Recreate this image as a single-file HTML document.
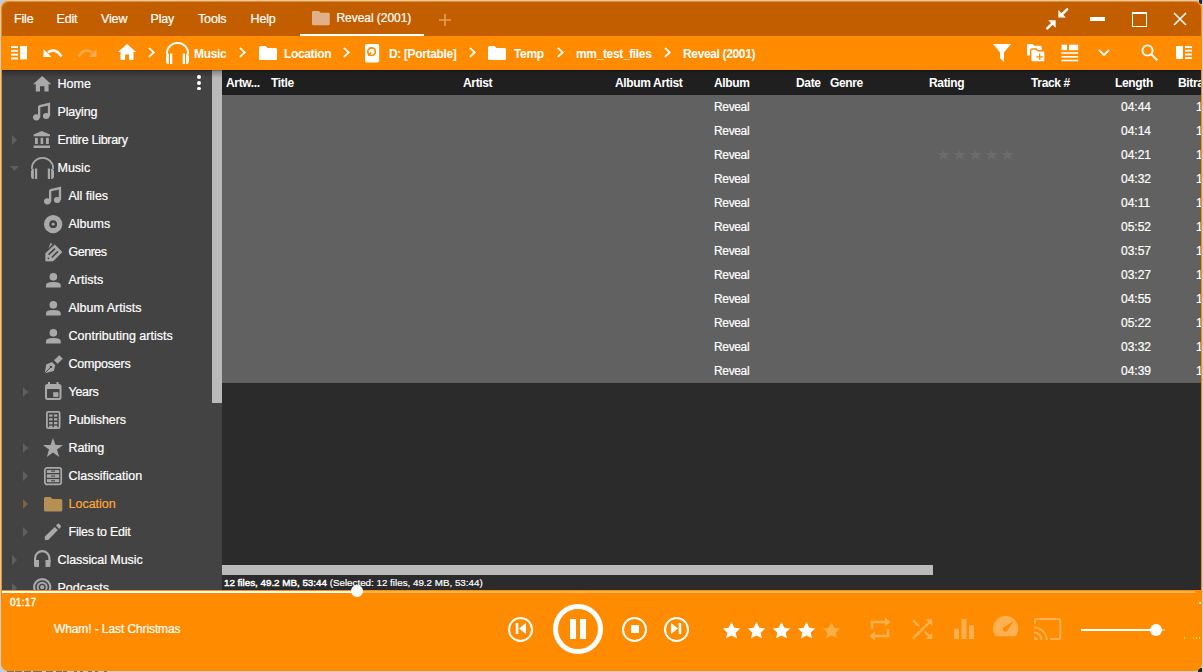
<!DOCTYPE html>
<html><head><meta charset="utf-8">
<style>
*{margin:0;padding:0;box-sizing:border-box}
html,body{width:1203px;height:672px;overflow:hidden;background:#c8cbd0;font-family:"Liberation Sans",sans-serif;position:relative}
.t{position:absolute;white-space:nowrap;line-height:1;-webkit-text-stroke:0.2px currentColor}
.s{position:absolute;overflow:visible}
.r{position:absolute}
</style></head><body>
<div class="r" style="left:1px;top:1px;width:1201px;height:670px;background:#ff8c00;border-radius:8px"></div>
<div class="r" style="left:1199px;top:0px;width:3px;height:4px;background:#1e2a3c;border-radius:0 0 0 2px"></div>
<div class="r" style="left:1198px;top:668px;width:4px;height:4px;background:#20242a;border-radius:3px 0 0 0"></div>
<div class="r" style="left:1px;top:1px;width:1201px;height:670px;background:#ff8c00;border-radius:8px"></div>
<div class="r" style="left:2px;top:2px;width:1199px;height:34px;background:#c35e00;border-radius:7px 7px 0 0"></div>
<div class="t" style="left:14px;top:13.42px;font-size:12.5px;color:#fff;letter-spacing:-0.15px">File</div>
<div class="t" style="left:56.5px;top:13.42px;font-size:12.5px;color:#fff;letter-spacing:-0.15px">Edit</div>
<div class="t" style="left:101px;top:13.42px;font-size:12.5px;color:#fff;letter-spacing:-0.15px">View</div>
<div class="t" style="left:150.5px;top:13.42px;font-size:12.5px;color:#fff;letter-spacing:-0.15px">Play</div>
<div class="t" style="left:198px;top:13.42px;font-size:12.5px;color:#fff;letter-spacing:-0.15px">Tools</div>
<div class="t" style="left:250.5px;top:13.42px;font-size:12.5px;color:#fff;letter-spacing:-0.15px">Help</div>
<svg class="s" style="left:312px;top:10.9px;" width="17.8" height="14.2" viewBox="0 0 17.8 14.2"><path d="M0 1.3Q0 0 1.3 0H6.8L8.6 1.8H16.5Q17.8 1.8 17.8 3.1V12.9Q17.8 14.2 16.5 14.2H1.3Q0 14.2 0 12.9Z" fill="#e0b088"/></svg>
<div class="t" style="left:336.5px;top:12.44px;font-size:12px;color:#fff;letter-spacing:-0.05px">Reveal (2001)</div>
<div class="r" style="left:300px;top:34px;width:124px;height:2px;background:#fff;"></div>
<svg class="s" style="left:438px;top:14px;" width="14" height="12" viewBox="0 0 14 12"><path d="M7 0V12M1 6H13" stroke="#e0a060" stroke-width="1.6"/></svg>
<svg class="s" style="left:1045px;top:7px;" width="24" height="23" viewBox="0 0 24 23"><g stroke="#fff" stroke-width="2.5" stroke-linecap="round" fill="none"><path d="M22.1 2.3L16.2 8.2"/><path d="M2.3 21.4L7.9 15.9"/></g><g fill="#fff"><path d="M13.3 3V10.4H20.9Z"/><path d="M10.6 13.3H3.2L10.6 20.8Z"/></g></svg>
<div class="r" style="left:1090px;top:17px;width:15px;height:3.5px;background:#fff;"></div>
<div class="r" style="left:1131.5px;top:11.5px;width:15px;height:15px;border:1.5px solid #fff;border-top-width:2.6px"></div>
<svg class="s" style="left:1173px;top:12px;" width="14" height="14" viewBox="0 0 14 14"><path d="M1 1L13 13M13 1L1 13" stroke="#fff" stroke-width="1.6"/></svg>
<svg class="s" style="left:11px;top:46px;" width="17" height="14" viewBox="0 0 17 14"><g fill="#fff"><rect x="0" y="0.1" width="7" height="1.9"/><rect x="0" y="3.9" width="7" height="1.9"/><rect x="0" y="7.7" width="7" height="1.9"/><rect x="0" y="11.5" width="7" height="1.9"/><rect x="9.1" y="0.1" width="6.9" height="13.3"/></g></svg>
<svg class="s" style="left:43px;top:48px;" width="20" height="10" viewBox="0 0 20 10"><path d="M5 4.5Q12 -1 18.5 8.5" stroke="#fff" stroke-width="2.4" fill="none"/><path d="M0.5 1V9H8.5Z" fill="#fff"/></svg>
<svg class="s" style="left:77px;top:48px;" width="20" height="10" viewBox="0 0 20 10"><path d="M15 4.5Q8 -1 1.5 8.5" stroke="#ffaa50" stroke-width="2.4" fill="none"/><path d="M19.5 1V9H11.5Z" fill="#ffaa50"/></svg>
<svg class="s" style="left:118px;top:44px;" width="18" height="16" viewBox="0 0 18 16"><path d="M9 0L18 8H15.5V16H11V10.5H7V16H2.5V8H0Z" fill="#fff"/></svg>
<svg class="s" style="left:148px;top:47.2px;" width="8" height="11" viewBox="0 0 8 11"><path d="M0.9 0.9L5.7 5.4L0.9 9.9" stroke="#fff" stroke-width="1.8" fill="none"/></svg>
<svg class="s" style="left:165.5px;top:42.4px;" width="23" height="22" viewBox="0 0 23 22"><path d="M0.85 12V11.5A10.65 10.65 0 0 1 22.15 11.5V12" fill="none" stroke="#fff" stroke-width="1.9"/><g fill="#fff"><path d="M2.9 11.8V22H2.4Q0 22 0 19V15Q0 11.8 2.4 11.8Z"/><rect x="4" y="11.5" width="2.3" height="10.5"/><path d="M20.1 11.8V22H20.6Q23 22 23 19V15Q23 11.8 20.6 11.8Z"/><rect x="16.7" y="11.5" width="2.3" height="10.5"/></g></svg>
<div class="t" style="left:194px;top:47.84px;font-size:12px;font-weight:bold;color:#fff;letter-spacing:-0.35px;-webkit-text-stroke:0;">Music</div>
<svg class="s" style="left:239px;top:47.2px;" width="8" height="11" viewBox="0 0 8 11"><path d="M0.9 0.9L5.7 5.4L0.9 9.9" stroke="#fff" stroke-width="1.8" fill="none"/></svg>
<svg class="s" style="left:259px;top:46px;" width="18" height="14" viewBox="0 0 18 14"><path d="M0 1.5Q0 0 1.5 0H6.5L8.5 2H16.5Q18 2 18 3.5V12.5Q18 14 16.5 14H1.5Q0 14 0 12.5Z" fill="#fff"/></svg>
<div class="t" style="left:284px;top:47.84px;font-size:12px;font-weight:bold;color:#fff;letter-spacing:-0.35px;-webkit-text-stroke:0;">Location</div>
<svg class="s" style="left:343px;top:47.2px;" width="8" height="11" viewBox="0 0 8 11"><path d="M0.9 0.9L5.7 5.4L0.9 9.9" stroke="#fff" stroke-width="1.8" fill="none"/></svg>
<svg class="s" style="left:365px;top:43.6px;" width="14.2" height="18.6" viewBox="0 0 14.2 18.6"><rect x="0" y="0" width="14.2" height="18.6" rx="1.8" fill="#fff"/><circle cx="6.6" cy="7.7" r="3.8" fill="none" stroke="#ff8c00" stroke-width="1.7"/><path d="M6.6 7.7L3.4 11.8" stroke="#ff8c00" stroke-width="1.7"/><circle cx="6.6" cy="7.7" r="1" fill="#fff"/></svg>
<div class="t" style="left:389px;top:47.84px;font-size:12px;font-weight:bold;color:#fff;letter-spacing:-0.35px;-webkit-text-stroke:0;">D: [Portable]</div>
<svg class="s" style="left:469px;top:47.2px;" width="8" height="11" viewBox="0 0 8 11"><path d="M0.9 0.9L5.7 5.4L0.9 9.9" stroke="#fff" stroke-width="1.8" fill="none"/></svg>
<svg class="s" style="left:488px;top:46px;" width="18" height="14" viewBox="0 0 18 14"><path d="M0 1.5Q0 0 1.5 0H6.5L8.5 2H16.5Q18 2 18 3.5V12.5Q18 14 16.5 14H1.5Q0 14 0 12.5Z" fill="#fff"/></svg>
<div class="t" style="left:514px;top:47.84px;font-size:12px;font-weight:bold;color:#fff;letter-spacing:-0.35px;-webkit-text-stroke:0;">Temp</div>
<svg class="s" style="left:557px;top:47.2px;" width="8" height="11" viewBox="0 0 8 11"><path d="M0.9 0.9L5.7 5.4L0.9 9.9" stroke="#fff" stroke-width="1.8" fill="none"/></svg>
<div class="t" style="left:576px;top:47.84px;font-size:12px;font-weight:bold;color:#fff;letter-spacing:-0.35px;-webkit-text-stroke:0;">mm_test_files</div>
<svg class="s" style="left:664px;top:47.2px;" width="8" height="11" viewBox="0 0 8 11"><path d="M0.9 0.9L5.7 5.4L0.9 9.9" stroke="#fff" stroke-width="1.8" fill="none"/></svg>
<div class="t" style="left:683px;top:47.84px;font-size:12px;font-weight:bold;color:#fff;letter-spacing:-0.35px;-webkit-text-stroke:0;">Reveal (2001)</div>
<svg class="s" style="left:993px;top:44px;" width="18" height="18" viewBox="0 0 18 18"><path d="M0 0H18L11 8.5V18L7 14V8.5Z" fill="#fff"/></svg>
<svg class="s" style="left:1026px;top:43px;" width="20" height="20" viewBox="0 0 20 20"><path d="M1 2.4Q1 1 2.4 1H6.5L8.2 2.7H14.3Q15.7 2.7 15.7 4.1V12.5H1Z" fill="#fff"/><path d="M4.7 7.4Q4.7 6 6.1 6H10.2L11.9 7.7H17.6Q19 7.7 19 9.1V17.5Q19 18.9 17.6 18.9H6.1Q4.7 18.9 4.7 17.5Z" fill="#fff" stroke="#ff8c00" stroke-width="1.4"/><path d="M13.7 10.6V17M10.5 13.8H16.9" stroke="#ff8c00" stroke-width="1.3"/></svg>
<svg class="s" style="left:1061px;top:44px;" width="18" height="18" viewBox="0 0 18 18"><g fill="#fff"><rect x="0.5" y="0.7" width="5.5" height="5.5"/><rect x="8" y="0.7" width="9.2" height="5.5"/><rect x="0.5" y="8.2" width="16.7" height="1.6"/><rect x="0.5" y="12" width="16.7" height="1.6"/><rect x="0.5" y="15.7" width="16.7" height="1.6"/></g></svg>
<svg class="s" style="left:1098px;top:49px;" width="12" height="8" viewBox="0 0 12 8"><path d="M1 1L6 6L11 1" stroke="#fff" stroke-width="1.8" fill="none"/></svg>
<svg class="s" style="left:1141px;top:44px;" width="17" height="17" viewBox="0 0 17 17"><circle cx="6.5" cy="6.5" r="5.1" stroke="#fff" stroke-width="1.8" fill="none"/><path d="M10.1 10.1L16.2 16.2" stroke="#fff" stroke-width="2"/></svg>
<svg class="s" style="left:1176px;top:46.4px;" width="17" height="14" viewBox="0 0 17 14"><g fill="#fff"><rect x="0" y="0" width="6.9" height="13"/><rect x="9" y="0" width="7" height="1.9"/><rect x="9" y="3.7" width="7" height="1.9"/><rect x="9" y="7.5" width="7" height="1.9"/><rect x="9" y="11.1" width="7" height="1.9"/></g></svg>
<div class="r" style="left:2px;top:70px;width:220px;height:520px;background:#434343;"></div>
<div class="r" style="left:212px;top:70px;width:10px;height:333px;background:#bababa;"></div>
<div class="r" style="left:2px;top:70px;width:220px;height:8px;background:linear-gradient(rgba(0,0,0,0.5),rgba(0,0,0,0.25) 20%,rgba(0,0,0,0) 100%);"></div>
<div class="r" style="left:197.1px;top:75.39999999999999px;width:3.8px;height:3.8px;border-radius:50%;background:#fff"></div>
<div class="r" style="left:197.1px;top:81.0px;width:3.8px;height:3.8px;border-radius:50%;background:#fff"></div>
<div class="r" style="left:197.1px;top:86.6px;width:3.8px;height:3.8px;border-radius:50%;background:#fff"></div>
<svg class="s" style="left:32.8px;top:76.3px;" width="18.4" height="15.4" viewBox="0 0 18.4 15.4"><path d="M9.2 0L18.4 8.2H15.6V15.4H11.4V10.2H7V15.4H2.8V8.2H0Z" fill="#a9a9a9"/></svg>
<div class="t" style="left:57.5px;top:78.42px;font-size:12.5px;color:#fff;letter-spacing:0px;">Home</div>
<svg class="s" style="left:33.4px;top:102.75px;" width="17.2" height="17.5" viewBox="0 0 17.2 17.5"><path d="M6 3.3L16 1V13" stroke="#a9a9a9" stroke-width="2.3" fill="none"/><ellipse cx="3.4" cy="14.3" rx="3.4" ry="3.1" fill="#a9a9a9"/><ellipse cx="13.2" cy="12.9" rx="3.3" ry="3" fill="#a9a9a9"/><rect x="5" y="3" width="2.3" height="11.5" fill="#a9a9a9"/></svg>
<div class="t" style="left:57.5px;top:106.42px;font-size:12.5px;color:#fff;letter-spacing:-0.18px;">Playing</div>
<svg class="s" style="left:12px;top:135px;" width="6" height="10" viewBox="0 0 6 10"><path d="M0 0L5 5L0 10Z" fill="#5f5f5f"/></svg>
<svg class="s" style="left:33.0px;top:131.0px;" width="18" height="18" viewBox="0 0 18 18"><path d="M0.6 3.6L8.8 0L17 3.6V5.2H0.6Z" fill="#a9a9a9"/><g fill="#a9a9a9"><rect x="2" y="6.8" width="2.8" height="6.2"/><rect x="7.6" y="6.8" width="2.6" height="6.2"/><rect x="13" y="6.8" width="2.8" height="6.2"/><rect x="0.6" y="14.5" width="16.4" height="2.5"/></g></svg>
<div class="t" style="left:57.5px;top:134.42px;font-size:12.5px;color:#fff;letter-spacing:-0.3px;">Entire Library</div>
<svg class="s" style="left:10.4px;top:165.7px;" width="10" height="6" viewBox="0 0 10 6"><path d="M0 0H9L4.5 4.8Z" fill="#5f5f5f"/></svg>
<svg class="s" style="left:30.5px;top:157.0px;" width="23" height="22" viewBox="0 0 23 22"><path d="M0.85 12V11.5A10.65 10.65 0 0 1 22.15 11.5V12" fill="none" stroke="#a9a9a9" stroke-width="1.7"/><g fill="#a9a9a9"><path d="M2.9 11.8V22H2.4Q0 22 0 19V15Q0 11.8 2.4 11.8Z"/><rect x="4" y="11.5" width="2.2" height="10.5"/><path d="M20.1 11.8V22H20.6Q23 22 23 19V15Q23 11.8 20.6 11.8Z"/><rect x="16.8" y="11.5" width="2.2" height="10.5"/></g></svg>
<div class="t" style="left:57.5px;top:162.42px;font-size:12.5px;color:#fff;letter-spacing:0px;">Music</div>
<svg class="s" style="left:44.4px;top:186.55px;" width="17.2" height="17.5" viewBox="0 0 17.2 17.5"><path d="M6 3.3L16 1V13" stroke="#a9a9a9" stroke-width="2.3" fill="none"/><ellipse cx="3.4" cy="14.3" rx="3.4" ry="3.1" fill="#a9a9a9"/><ellipse cx="13.2" cy="12.9" rx="3.3" ry="3" fill="#a9a9a9"/><rect x="5" y="3" width="2.3" height="11.5" fill="#a9a9a9"/></svg>
<div class="t" style="left:68.5px;top:190.42px;font-size:12.5px;color:#fff;letter-spacing:0px;">All files</div>
<svg class="s" style="left:43.85px;top:214.85px;" width="18.3" height="18.3" viewBox="0 0 18.3 18.3"><circle cx="9.15" cy="9.15" r="9.15" fill="#a9a9a9"/><circle cx="9.15" cy="9.15" r="3.9" fill="#434343"/><circle cx="9.15" cy="9.15" r="1.4" fill="#a9a9a9"/></svg>
<div class="t" style="left:68.5px;top:218.42px;font-size:12.5px;color:#fff;letter-spacing:0px;">Albums</div>
<svg class="s" style="left:43.5px;top:241.5px;" width="19" height="20" viewBox="0 0 19 20"><path d="M1.7 19.1V11.2L10.8 2.8L18.1 10L9.2 19.1Z" fill="#a9a9a9" stroke="#a9a9a9" stroke-width="0.6" stroke-linejoin="round"/><path d="M4.6 12.6L11 6.6M7.8 15.5L13.9 9.4" stroke="#434343" stroke-width="1.6"/><circle cx="4.4" cy="16.4" r="0.8" fill="#434343"/><path d="M4.4 6.4L6.6 0.8L8.4 1.9Z" fill="#a9a9a9"/></svg>
<div class="t" style="left:68.5px;top:246.42px;font-size:12.5px;color:#fff;letter-spacing:-0.5px;">Genres</div>
<svg class="s" style="left:45.65px;top:272.75px;" width="14.7" height="14.5" viewBox="0 0 14.7 14.5"><circle cx="7.35" cy="3.85" r="3.85" fill="#a9a9a9"/><path d="M0 14.5V12.3Q0 9 7.35 9Q14.7 9 14.7 12.3V14.5Z" fill="#a9a9a9"/></svg>
<div class="t" style="left:68.5px;top:274.42px;font-size:12.5px;color:#fff;letter-spacing:0px;">Artists</div>
<svg class="s" style="left:45.65px;top:300.75px;" width="14.7" height="14.5" viewBox="0 0 14.7 14.5"><circle cx="7.35" cy="3.85" r="3.85" fill="#a9a9a9"/><path d="M0 14.5V12.3Q0 9 7.35 9Q14.7 9 14.7 12.3V14.5Z" fill="#a9a9a9"/></svg>
<div class="t" style="left:68.5px;top:302.42px;font-size:12.5px;color:#fff;letter-spacing:0px;">Album Artists</div>
<svg class="s" style="left:45.65px;top:328.75px;" width="14.7" height="14.5" viewBox="0 0 14.7 14.5"><circle cx="7.35" cy="3.85" r="3.85" fill="#a9a9a9"/><path d="M0 14.5V12.3Q0 9 7.35 9Q14.7 9 14.7 12.3V14.5Z" fill="#a9a9a9"/></svg>
<div class="t" style="left:68.5px;top:330.42px;font-size:12.5px;color:#fff;letter-spacing:0px;">Contributing artists</div>
<svg class="s" style="left:43.5px;top:355.1px;" width="19" height="19" viewBox="0 0 19 19"><path d="M10.25 5.2L15.25 0.4L18.5 3.75L13.6 8.6Z" fill="#a9a9a9" stroke="#a9a9a9" stroke-width="0.5" stroke-linejoin="round"/><path d="M0.8 18.2L2.2 9.5L8 7L11.3 10.3L9.8 16.1Z" fill="#a9a9a9"/><path d="M1.1 17.9L6.5 12.4" stroke="#434343" stroke-width="0.9"/><circle cx="6.9" cy="11.9" r="1.2" fill="#434343"/></svg>
<div class="t" style="left:68.5px;top:358.42px;font-size:12.5px;color:#fff;letter-spacing:-0.2px;">Composers</div>
<svg class="s" style="left:23px;top:387px;" width="6" height="10" viewBox="0 0 6 10"><path d="M0 0L5 5L0 10Z" fill="#5f5f5f"/></svg>
<svg class="s" style="left:44.75px;top:382.1px;" width="16.5" height="18" viewBox="0 0 16.5 18"><rect x="1" y="3" width="14.5" height="14" rx="1.5" fill="none" stroke="#a9a9a9" stroke-width="2"/><rect x="1" y="3" width="14.5" height="4" fill="#a9a9a9"/><g fill="#a9a9a9"><rect x="3" y="0" width="2" height="4"/><rect x="11.5" y="0" width="2" height="4"/><rect x="8.2" y="10.2" width="5.2" height="4.7"/></g></svg>
<div class="t" style="left:68.5px;top:386.42px;font-size:12.5px;color:#fff;letter-spacing:-0.3px;">Years</div>
<svg class="s" style="left:45.75px;top:411.0px;" width="14.5" height="18" viewBox="0 0 14.5 18"><rect x="0.9" y="0.9" width="12.7" height="16.2" rx="1.2" fill="none" stroke="#a9a9a9" stroke-width="1.8"/><g fill="#a9a9a9"><rect x="3.2" y="3.4" width="3.3" height="2.3"/><rect x="8" y="3.4" width="3.3" height="2.3"/><rect x="3.2" y="7.2" width="3.3" height="2.3"/><rect x="8" y="7.2" width="3.3" height="2.3"/><rect x="3.2" y="11" width="3.3" height="2.3"/><rect x="8" y="11" width="3.3" height="2.3"/><rect x="3.2" y="14.6" width="3.3" height="2.4"/><rect x="8" y="14.6" width="3.3" height="2.4"/></g></svg>
<div class="t" style="left:68.5px;top:414.42px;font-size:12.5px;color:#fff;letter-spacing:-0.1px;">Publishers</div>
<svg class="s" style="left:23px;top:443px;" width="6" height="10" viewBox="0 0 6 10"><path d="M0 0L5 5L0 10Z" fill="#5f5f5f"/></svg>
<svg class="s" style="left:43.0px;top:438.1px;" width="20" height="19" viewBox="0 0 20 19"><path d="M10 0L12.5 7H20L14 11.5L16.2 19L10 14.5L3.8 19L6 11.5L0 7H7.5Z" fill="#a9a9a9"/></svg>
<div class="t" style="left:68.5px;top:442.42px;font-size:12.5px;color:#fff;letter-spacing:-0.1px;">Rating</div>
<svg class="s" style="left:23px;top:471px;" width="6" height="10" viewBox="0 0 6 10"><path d="M0 0L5 5L0 10Z" fill="#5f5f5f"/></svg>
<svg class="s" style="left:43.95px;top:466.85px;" width="18.1" height="18.3" viewBox="0 0 18.1 18.3"><rect x="0.85" y="0.85" width="16.4" height="16.6" rx="2.2" fill="none" stroke="#a9a9a9" stroke-width="1.7"/><g fill="#a9a9a9"><rect x="2.9" y="3.1" width="12.3" height="2.9"/><rect x="2.9" y="7.3" width="12.3" height="3.5"/><rect x="2.9" y="12.1" width="12.3" height="3.1"/></g><g fill="#434343"><rect x="7.2" y="3.6" width="3.8" height="1.1"/><rect x="7.2" y="8.5" width="3.8" height="1.1"/><rect x="7.2" y="13.2" width="3.8" height="1.1"/></g></svg>
<div class="t" style="left:68.5px;top:470.42px;font-size:12.5px;color:#fff;letter-spacing:0px;">Classification</div>
<svg class="s" style="left:23px;top:499px;" width="6" height="10" viewBox="0 0 6 10"><path d="M0 0L5 5L0 10Z" fill="#7a6440"/></svg>
<svg class="s" style="left:43.85px;top:496.5px;" width="18.3" height="14.5" viewBox="0 0 18.3 14.5"><path d="M0 1.5Q0 0 1.5 0H6.5L8.5 2H16.8Q18.3 2 18.3 3.5V13Q18.3 14.5 16.8 14.5H1.5Q0 14.5 0 13Z" fill="#b59055"/></svg>
<div class="t" style="left:68.5px;top:498.42px;font-size:12.5px;color:#ffa836;letter-spacing:0px;">Location</div>
<svg class="s" style="left:23px;top:527px;" width="6" height="10" viewBox="0 0 6 10"><path d="M0 0L5 5L0 10Z" fill="#5f5f5f"/></svg>
<svg class="s" style="left:44.0px;top:521.5px;" width="18" height="19" viewBox="0 0 18 19"><path d="M0.8 17.9V14.4L10.8 5L13.9 8.1L4.2 17.9Z" fill="#a9a9a9"/><path d="M12 3.5L14.1 1.6Q14.5 1.3 14.9 1.6L17 3.9Q17.3 4.3 17 4.7L15.2 7Z" fill="#a9a9a9"/></svg>
<div class="t" style="left:68.5px;top:526.42px;font-size:12.5px;color:#fff;letter-spacing:-0.25px;">Files to Edit</div>
<svg class="s" style="left:12px;top:555px;" width="6" height="10" viewBox="0 0 6 10"><path d="M0 0L5 5L0 10Z" fill="#5f5f5f"/></svg>
<svg class="s" style="left:33.75px;top:550.0px;" width="16.5" height="17" viewBox="0 0 16.5 17"><path d="M1.1 12V8.3A7.15 7.15 0 0 1 15.4 8.3V12" fill="none" stroke="#a9a9a9" stroke-width="2.2"/><g fill="#a9a9a9"><path d="M0 10H5V17H1.5Q0 17 0 15.5Z"/><path d="M16.5 10H11.5V17H15Q16.5 17 16.5 15.5Z"/></g></svg>
<div class="t" style="left:57.5px;top:554.42px;font-size:12.5px;color:#fff;letter-spacing:-0.07px;">Classical Music</div>
<svg class="s" style="left:12px;top:583px;" width="6" height="10" viewBox="0 0 6 10"><path d="M0 0L5 5L0 10Z" fill="#5f5f5f"/></svg>
<svg class="s" style="left:32.8px;top:578.4px;" width="18.4" height="18.4" viewBox="0 0 18.4 18.4"><circle cx="9.2" cy="9.2" r="8.1" fill="none" stroke="#a9a9a9" stroke-width="2.2"/><circle cx="9.2" cy="9.2" r="4.5" fill="none" stroke="#a9a9a9" stroke-width="1.9"/><circle cx="9.2" cy="9.2" r="2.1" fill="#a9a9a9"/></svg>
<div class="t" style="left:57.5px;top:582.42px;font-size:12.5px;color:#fff;letter-spacing:0px;">Podcasts</div>
<div class="r" style="left:222px;top:70px;width:979px;height:520px;background:#2b2b2b;"></div>
<div class="r" style="left:222px;top:70px;width:979px;height:25px;background:#1f1f1f;"></div>
<div class="r" style="left:222px;top:70px;width:979px;height:3px;background:linear-gradient(rgba(0,0,0,0.4),rgba(0,0,0,0));"></div>
<div class="t" style="left:226px;top:76.84px;font-size:12px;font-weight:bold;color:#fff;letter-spacing:-0.35px;-webkit-text-stroke:0;">Artw...</div>
<div class="t" style="left:271px;top:76.84px;font-size:12px;font-weight:bold;color:#fff;letter-spacing:-0.35px;-webkit-text-stroke:0;">Title</div>
<div class="t" style="left:463px;top:76.84px;font-size:12px;font-weight:bold;color:#fff;letter-spacing:-0.35px;-webkit-text-stroke:0;">Artist</div>
<div class="t" style="left:615px;top:76.84px;font-size:12px;font-weight:bold;color:#fff;letter-spacing:-0.35px;-webkit-text-stroke:0;">Album Artist</div>
<div class="t" style="left:714px;top:76.84px;font-size:12px;font-weight:bold;color:#fff;letter-spacing:-0.35px;-webkit-text-stroke:0;">Album</div>
<div class="t" style="left:796px;top:76.84px;font-size:12px;font-weight:bold;color:#fff;letter-spacing:-0.35px;-webkit-text-stroke:0;">Date</div>
<div class="t" style="left:830px;top:76.84px;font-size:12px;font-weight:bold;color:#fff;letter-spacing:-0.35px;-webkit-text-stroke:0;">Genre</div>
<div class="t" style="left:929px;top:76.84px;font-size:12px;font-weight:bold;color:#fff;letter-spacing:-0.35px;-webkit-text-stroke:0;">Rating</div>
<div class="t" style="left:1031px;top:76.84px;font-size:12px;font-weight:bold;color:#fff;letter-spacing:-0.35px;-webkit-text-stroke:0;">Track #</div>
<div class="t" style="left:1115px;top:76.84px;font-size:12px;font-weight:bold;color:#fff;letter-spacing:-0.35px;-webkit-text-stroke:0;">Length</div>
<div class="t" style="left:1178px;top:76.84px;font-size:12px;font-weight:bold;color:#fff;letter-spacing:-0.35px;-webkit-text-stroke:0;">Bitra</div>
<div class="r" style="left:222px;top:95px;width:979px;height:288px;background:#616161;"></div>
<div class="t" style="left:714px;top:100.84px;font-size:12px;color:#fff;letter-spacing:-0.35px">Reveal</div>
<div class="t" style="left:1121px;top:100.84px;font-size:12px;color:#fff;">04:44</div>
<div class="t" style="left:1196px;top:100.84px;font-size:12px;color:#fff;">1</div>
<div class="t" style="left:714px;top:124.84px;font-size:12px;color:#fff;letter-spacing:-0.35px">Reveal</div>
<div class="t" style="left:1121px;top:124.84px;font-size:12px;color:#fff;">04:14</div>
<div class="t" style="left:1196px;top:124.84px;font-size:12px;color:#fff;">1</div>
<div class="t" style="left:714px;top:148.84px;font-size:12px;color:#fff;letter-spacing:-0.35px">Reveal</div>
<div class="t" style="left:1121px;top:148.84px;font-size:12px;color:#fff;">04:21</div>
<div class="t" style="left:1196px;top:148.84px;font-size:12px;color:#fff;">1</div>
<div class="t" style="left:714px;top:172.84px;font-size:12px;color:#fff;letter-spacing:-0.35px">Reveal</div>
<div class="t" style="left:1121px;top:172.84px;font-size:12px;color:#fff;">04:32</div>
<div class="t" style="left:1196px;top:172.84px;font-size:12px;color:#fff;">1</div>
<div class="t" style="left:714px;top:196.84px;font-size:12px;color:#fff;letter-spacing:-0.35px">Reveal</div>
<div class="t" style="left:1121px;top:196.84px;font-size:12px;color:#fff;">04:11</div>
<div class="t" style="left:1196px;top:196.84px;font-size:12px;color:#fff;">1</div>
<div class="t" style="left:714px;top:220.84px;font-size:12px;color:#fff;letter-spacing:-0.35px">Reveal</div>
<div class="t" style="left:1121px;top:220.84px;font-size:12px;color:#fff;">05:52</div>
<div class="t" style="left:1196px;top:220.84px;font-size:12px;color:#fff;">1</div>
<div class="t" style="left:714px;top:244.84px;font-size:12px;color:#fff;letter-spacing:-0.35px">Reveal</div>
<div class="t" style="left:1121px;top:244.84px;font-size:12px;color:#fff;">03:57</div>
<div class="t" style="left:1196px;top:244.84px;font-size:12px;color:#fff;">1</div>
<div class="t" style="left:714px;top:268.84px;font-size:12px;color:#fff;letter-spacing:-0.35px">Reveal</div>
<div class="t" style="left:1121px;top:268.84px;font-size:12px;color:#fff;">03:27</div>
<div class="t" style="left:1196px;top:268.84px;font-size:12px;color:#fff;">1</div>
<div class="t" style="left:714px;top:292.84px;font-size:12px;color:#fff;letter-spacing:-0.35px">Reveal</div>
<div class="t" style="left:1121px;top:292.84px;font-size:12px;color:#fff;">04:55</div>
<div class="t" style="left:1196px;top:292.84px;font-size:12px;color:#fff;">1</div>
<div class="t" style="left:714px;top:316.84px;font-size:12px;color:#fff;letter-spacing:-0.35px">Reveal</div>
<div class="t" style="left:1121px;top:316.84px;font-size:12px;color:#fff;">05:22</div>
<div class="t" style="left:1196px;top:316.84px;font-size:12px;color:#fff;">1</div>
<div class="t" style="left:714px;top:340.84px;font-size:12px;color:#fff;letter-spacing:-0.35px">Reveal</div>
<div class="t" style="left:1121px;top:340.84px;font-size:12px;color:#fff;">03:32</div>
<div class="t" style="left:1196px;top:340.84px;font-size:12px;color:#fff;">1</div>
<div class="t" style="left:714px;top:364.84px;font-size:12px;color:#fff;letter-spacing:-0.35px">Reveal</div>
<div class="t" style="left:1121px;top:364.84px;font-size:12px;color:#fff;">04:39</div>
<div class="t" style="left:1196px;top:364.84px;font-size:12px;color:#fff;">1</div>
<svg class="s" style="left:936.5px;top:148.8px;" width="13" height="11" viewBox="0 0 13 11"><path d="M6.5 0L8.1 4.1H13L9.1 6.8L10.5 11L6.5 8.4L2.5 11L3.9 6.8L0 4.1H4.9Z" fill="#6b6b6b"/></svg>
<svg class="s" style="left:952.5px;top:148.8px;" width="13" height="11" viewBox="0 0 13 11"><path d="M6.5 0L8.1 4.1H13L9.1 6.8L10.5 11L6.5 8.4L2.5 11L3.9 6.8L0 4.1H4.9Z" fill="#6b6b6b"/></svg>
<svg class="s" style="left:968.5px;top:148.8px;" width="13" height="11" viewBox="0 0 13 11"><path d="M6.5 0L8.1 4.1H13L9.1 6.8L10.5 11L6.5 8.4L2.5 11L3.9 6.8L0 4.1H4.9Z" fill="#6b6b6b"/></svg>
<svg class="s" style="left:984.5px;top:148.8px;" width="13" height="11" viewBox="0 0 13 11"><path d="M6.5 0L8.1 4.1H13L9.1 6.8L10.5 11L6.5 8.4L2.5 11L3.9 6.8L0 4.1H4.9Z" fill="#6b6b6b"/></svg>
<svg class="s" style="left:1000.5px;top:148.8px;" width="13" height="11" viewBox="0 0 13 11"><path d="M6.5 0L8.1 4.1H13L9.1 6.8L10.5 11L6.5 8.4L2.5 11L3.9 6.8L0 4.1H4.9Z" fill="#6b6b6b"/></svg>
<div class="r" style="left:222px;top:565px;width:711px;height:10px;background:#bababa;"></div>
<div class="t" style="left:224px;top:578px;font-size:9.8px;color:#fff"><span style="-webkit-text-stroke:0.45px #fff">12 files, 49.2 MB, 53:44</span> (Selected: 12 files, 49.2 MB, 53:44)</div>
<div class="r" style="left:1201px;top:70px;width:1px;height:520px;background:#ff8c00;"></div>
<div class="r" style="left:1202px;top:70px;width:1px;height:520px;background:#c8cbd0;"></div>
<div class="r" style="left:2px;top:590px;width:1199px;height:80px;background:#ff8c00;border-radius:0 0 7px 7px"></div>
<div class="r" style="left:2px;top:591px;width:1193px;height:2px;background:rgba(255,255,255,0.35);"></div>
<div class="r" style="left:2px;top:591px;width:355px;height:2px;background:#fff;"></div>
<div class="r" style="left:351px;top:585px;width:12px;height:12px;border-radius:50%;background:#fff"></div>
<div class="t" style="left:10px;top:598.25px;font-size:10.1px;color:#fff;letter-spacing:0.2px;-webkit-text-stroke:0.4px #fff;">01:17</div>
<div class="t" style="left:54px;top:622.84px;font-size:12px;color:#fff;letter-spacing:-0.1px;">Wham! - Last Christmas</div>
<div class="r" style="left:508.0px;top:616.5px;width:25.0px;height:25.0px;border-radius:50%;border:2px solid #fff"></div>
<svg class="s" style="left:514.5px;top:623px;" width="12" height="11" viewBox="0 0 12 11"><rect x="0.8" y="0" width="2.5" height="11" fill="#fff"/><path d="M11 0V11L4 5.5Z" fill="#fff"/></svg>
<div class="r" style="left:553px;top:604px;width:50px;height:50px;border-radius:50%;border:5.2px solid #fff"></div>
<div class="r" style="left:570px;top:619px;width:6px;height:20px;background:#fff;"></div>
<div class="r" style="left:580px;top:619px;width:6px;height:20px;background:#fff;"></div>
<div class="r" style="left:622.0px;top:616.5px;width:25.0px;height:25.0px;border-radius:50%;border:2px solid #fff"></div>
<div class="r" style="left:630.8px;top:624.6px;width:8.4px;height:8.4px;background:#fff;"></div>
<div class="r" style="left:664.0px;top:616.5px;width:25.0px;height:25.0px;border-radius:50%;border:2px solid #fff"></div>
<svg class="s" style="left:669.5px;top:623px;" width="12" height="11" viewBox="0 0 12 11"><rect x="8.7" y="0" width="2.5" height="11" fill="#fff"/><path d="M1 0V11L8 5.5Z" fill="#fff"/></svg>
<svg class="s" style="left:722.9px;top:621.8px;" width="17.1" height="16.3" viewBox="0 0 17.1 16.3"><path d="M8.5 0L11.35 5.7L17.1 6.5L12.6 10.7L14 16.3L8.5 13.4L3 16.3L4.4 10.7L0 6.5L5.65 5.7Z" fill="#fff"/></svg>
<svg class="s" style="left:747.9px;top:621.8px;" width="17.1" height="16.3" viewBox="0 0 17.1 16.3"><path d="M8.5 0L11.35 5.7L17.1 6.5L12.6 10.7L14 16.3L8.5 13.4L3 16.3L4.4 10.7L0 6.5L5.65 5.7Z" fill="#fff"/></svg>
<svg class="s" style="left:772.9px;top:621.8px;" width="17.1" height="16.3" viewBox="0 0 17.1 16.3"><path d="M8.5 0L11.35 5.7L17.1 6.5L12.6 10.7L14 16.3L8.5 13.4L3 16.3L4.4 10.7L0 6.5L5.65 5.7Z" fill="#fff"/></svg>
<svg class="s" style="left:797.9px;top:621.8px;" width="17.1" height="16.3" viewBox="0 0 17.1 16.3"><path d="M8.5 0L11.35 5.7L17.1 6.5L12.6 10.7L14 16.3L8.5 13.4L3 16.3L4.4 10.7L0 6.5L5.65 5.7Z" fill="#fff"/></svg>
<svg class="s" style="left:822.9px;top:621.8px;" width="17.1" height="16.3" viewBox="0 0 17.1 16.3"><path d="M8.5 0L11.35 5.7L17.1 6.5L12.6 10.7L14 16.3L8.5 13.4L3 16.3L4.4 10.7L0 6.5L5.65 5.7Z" fill="#ffad45"/></svg>
<svg class="s" style="left:869px;top:617px;" width="22" height="24" viewBox="0 0 22 24"><g fill="none" stroke="#ffb050" stroke-width="2.6"><path d="M3 12V5H17"/><path d="M19 12V19H5"/></g><path d="M16 0.5L21.5 5L16 9.5Z" fill="#ffb050"/><path d="M6 14.5L0.5 19L6 23.5Z" fill="#ffb050"/></svg>
<svg class="s" style="left:912px;top:619px;" width="21" height="21" viewBox="0 0 21 21"><g fill="none" stroke="#ffb050" stroke-width="2.3"><path d="M1 19.6L18 2.6"/><path d="M1 1.2L6.8 7"/><path d="M12.5 12.5L18 18"/></g><path d="M13.6 0.2H20.2V6.8Z" fill="#ffb050"/><path d="M20.2 13.4V20H13.6Z" fill="#ffb050"/></svg>
<svg class="s" style="left:954px;top:619px;" width="21" height="20" viewBox="0 0 21 20"><g fill="#ffb050"><rect x="0.1" y="9.8" width="4.8" height="10.2"/><rect x="7.5" y="0" width="5" height="20"/><rect x="15" y="6.2" width="5" height="13.8"/></g></svg>
<svg class="s" style="left:993.3px;top:616.3px;" width="25.2" height="20.3" viewBox="0 0 25.2 20.3"><path d="M2.63 20.3A12.6 12.6 0 1 1 22.57 20.3Z" fill="#ffb050"/><path d="M10.6 11.6L21.1 4.6L14 15Z" fill="#ff8c00"/><circle cx="12.3" cy="13.3" r="2.4" fill="#ff8c00"/></svg>
<svg class="s" style="left:1034.2px;top:617.9px;" width="27.2" height="22.1" viewBox="0 0 27.2 22.1"><path d="M1 5.7V2.5Q1 1 2.5 1H24.7Q26.2 1 26.2 2.5V19.6Q26.2 21.1 24.7 21.1H16.3" fill="none" stroke="#ffb050" stroke-width="2"/><path d="M0 9.4A12.7 12.7 0 0 1 12.7 22.1M0 14.6A7.5 7.5 0 0 1 7.5 22.1" fill="none" stroke="#ffb050" stroke-width="2"/><path d="M0 18.5A3.6 3.6 0 0 1 3.6 22.1H0Z" fill="#ffb050"/></svg>
<div class="r" style="left:1081px;top:629px;width:75px;height:2px;background:#fff;"></div>
<div class="r" style="left:1156px;top:629px;width:9px;height:2px;background:rgba(255,255,255,0.4);"></div>
<div class="r" style="left:1199px;top:602px;width:2px;height:1.5px;background:#fff;"></div>
<div class="r" style="left:1184px;top:636.5px;width:1px;height:2px;background:#ffee00;"></div>
<div class="r" style="left:1193px;top:636.5px;width:1px;height:2px;background:#ffee00;"></div>
<div class="r" style="left:1196px;top:636.5px;width:1px;height:2px;background:#ffee00;"></div>
<div class="r" style="left:1199px;top:636.5px;width:1px;height:2px;background:#ffee00;"></div>
<div class="r" style="left:1150px;top:624px;width:12px;height:12px;border-radius:50%;background:#fff"></div>
<div class="r" style="left:7px;top:671px;width:7px;height:1px;background:rgba(20,25,50,0.5);"></div>
<div class="r" style="left:15px;top:671px;width:7px;height:1px;background:rgba(20,25,50,0.5);"></div>
<div class="r" style="left:24px;top:671px;width:7px;height:1px;background:rgba(20,25,50,0.5);"></div>
<div class="r" style="left:33px;top:671px;width:9px;height:1px;background:rgba(20,25,50,0.5);"></div>
<div class="r" style="left:46px;top:671px;width:7px;height:1px;background:rgba(20,25,50,0.5);"></div>
<div class="r" style="left:56px;top:671px;width:6px;height:1px;background:rgba(20,25,50,0.5);"></div>
<div class="r" style="left:63px;top:671px;width:4px;height:1px;background:rgba(20,25,50,0.5);"></div>
<div class="r" style="left:74px;top:671px;width:3px;height:1px;background:rgba(20,25,50,0.5);"></div>
<div class="r" style="left:80px;top:671px;width:3px;height:1px;background:rgba(20,25,50,0.5);"></div>
<div class="r" style="left:88px;top:671px;width:4px;height:1px;background:rgba(20,25,50,0.5);"></div>
<div class="r" style="left:95px;top:671px;width:3px;height:1px;background:rgba(20,25,50,0.5);"></div>
<div class="r" style="left:104px;top:671px;width:3px;height:1px;background:rgba(20,25,50,0.5);"></div>
</body></html>
